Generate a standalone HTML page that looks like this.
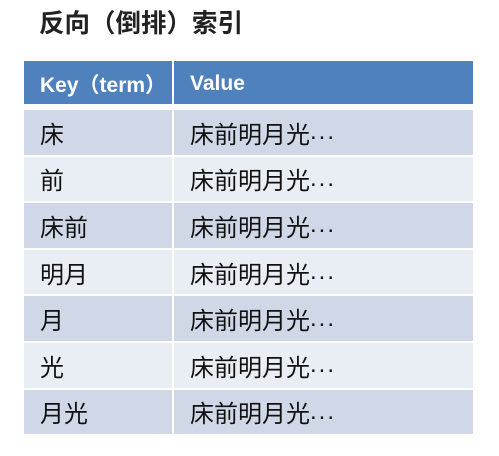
<!DOCTYPE html>
<html><head><meta charset="utf-8"><style>
body{margin:0;width:499px;height:456px;background:#fff;position:relative;font-family:"Liberation Sans","Noto Sans CJK SC",sans-serif;overflow:hidden}
.t{position:absolute;left:39px;top:6px;font-size:25.5px;font-weight:bold;color:#222;line-height:36px}
.r{position:absolute;left:24px;width:449px;height:44.6px}
.c{position:absolute;top:0;height:100%;display:flex;align-items:center;font-size:24px;color:#111;white-space:nowrap}
.c1{left:0;width:148px;padding-left:16px;box-sizing:border-box}
.c2{left:150px;right:0;padding-left:16px;box-sizing:border-box}
.h .c{background:#4f81bd;color:#fff;font-weight:bold;font-size:21px;padding-top:3px}
.o .c{background:#d0d8e8}.e .c{background:#e9edf4}
.d{letter-spacing:2px}
</style></head><body>
<div class="t">反向（倒排）索引</div>
<div class="r h" style="top:61px;height:43px"><div class="c c1">Key（term）</div><div class="c c2">Value</div></div>
<div class="r o" style="top:110px"><div class="c c1">床</div><div class="c c2">床前明月光<span class="d">...</span></div></div>
<div class="r e" style="top:156.6px"><div class="c c1">前</div><div class="c c2">床前明月光<span class="d">...</span></div></div>
<div class="r o" style="top:203.2px"><div class="c c1">床前</div><div class="c c2">床前明月光<span class="d">...</span></div></div>
<div class="r e" style="top:249.8px"><div class="c c1">明月</div><div class="c c2">床前明月光<span class="d">...</span></div></div>
<div class="r o" style="top:296.4px"><div class="c c1">月</div><div class="c c2">床前明月光<span class="d">...</span></div></div>
<div class="r e" style="top:343px"><div class="c c1">光</div><div class="c c2">床前明月光<span class="d">...</span></div></div>
<div class="r o" style="top:389.6px"><div class="c c1">月光</div><div class="c c2">床前明月光<span class="d">...</span></div></div>
</body></html>
